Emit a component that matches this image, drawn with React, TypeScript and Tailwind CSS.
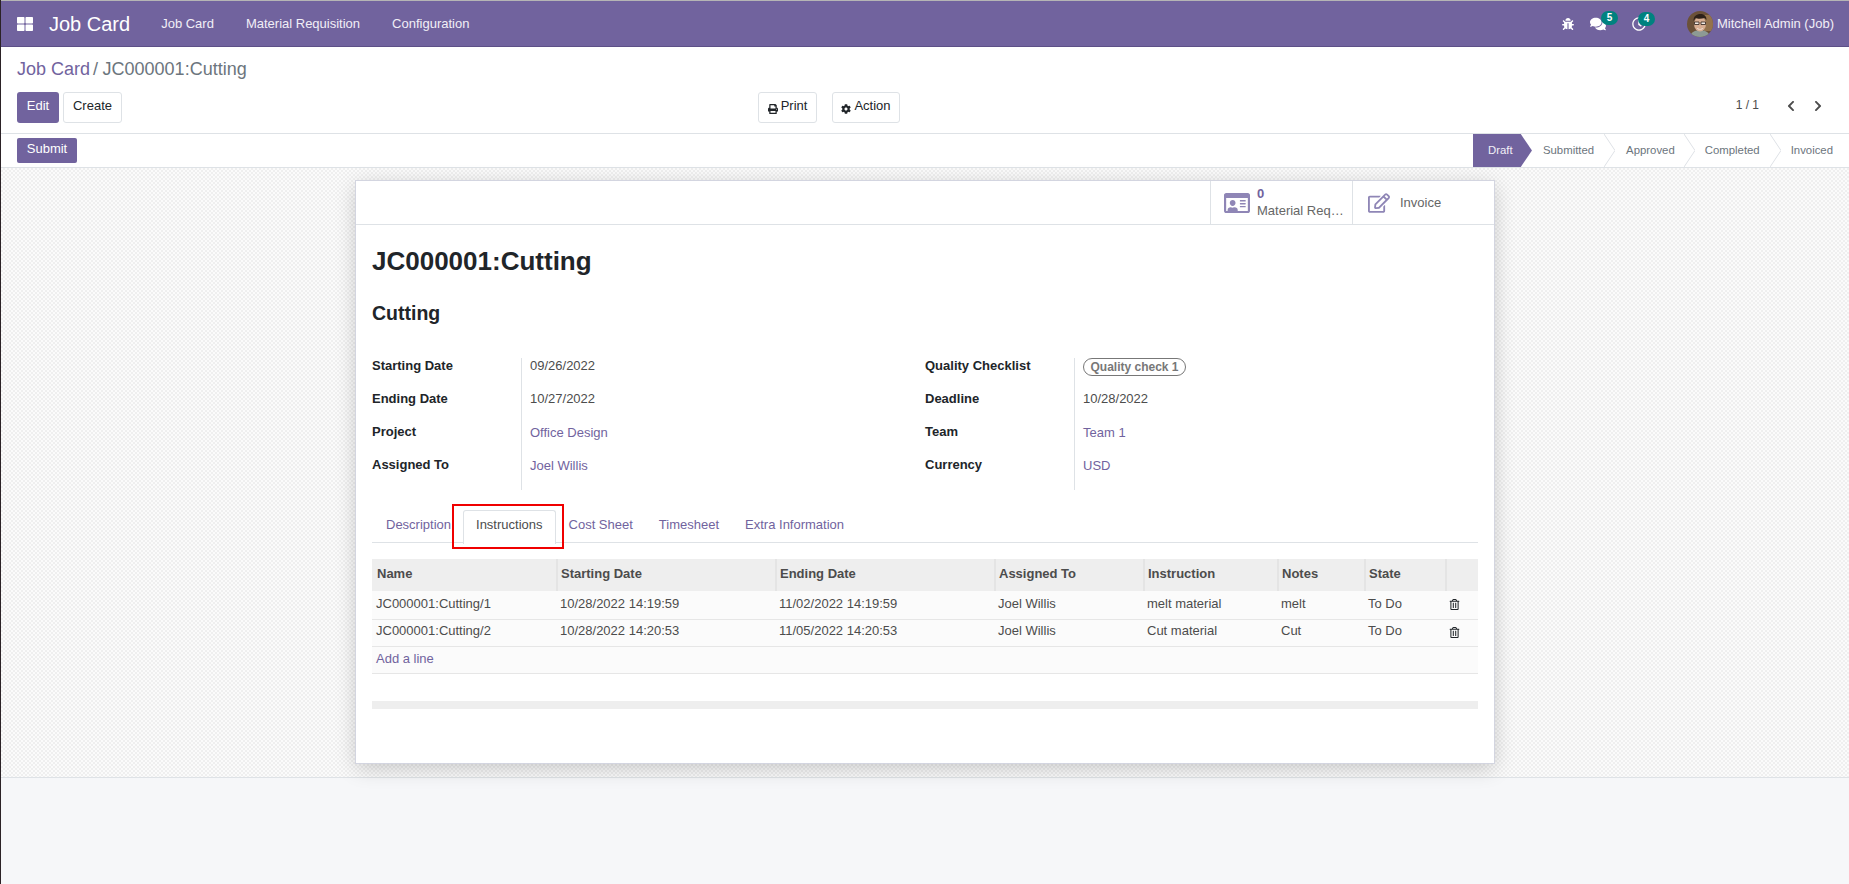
import React from "react"
import {
  FaBug,
  FaChevronLeft,
  FaChevronRight,
  FaCog,
  FaComments,
  FaPrint,
  FaRegClock,
  FaRegEdit,
  FaRegIdCard,
  FaRegTrashAlt,
  FaThLarge,
} from "react-icons/fa"

const columns = [
  { name: "Name", width: "w-[185px]" },
  { name: "Starting Date", width: "w-[219px]" },
  { name: "Ending Date", width: "w-[219px]" },
  { name: "Assigned To", width: "w-[149px]" },
  { name: "Instruction", width: "w-[134px]" },
  { name: "Notes", width: "w-[87px]" },
  { name: "State", width: "w-[81px]" },
  { name: "", width: "w-[32px]" },
]

const rows = [
  ["JC000001:Cutting/1", "10/28/2022 14:19:59", "11/02/2022 14:19:59", "Joel Willis", "melt material", "melt", "To Do"],
  ["JC000001:Cutting/2", "10/28/2022 14:20:53", "11/05/2022 14:20:53", "Joel Willis", "Cut material", "Cut", "To Do"],
]

const Avatar = () => (
  <svg viewBox="0 0 26 26" className="h-[26px] w-[26px] rounded-full">
    <rect width="26" height="26" fill="#6b5138" />
    <rect x="17" y="4" width="9" height="16" fill="#94724c" />
    <path d="M3 26c1-5 5-7 10-7s9 2 10 7z" fill="#8d9a94" />
    <ellipse cx="13" cy="13" rx="6" ry="7.5" fill="#d8ae92" />
    <path d="M6.5 10c0-5 3-7 7-7s6 2.500 6 6l-2-2c-3 1-7 1-9 0z" fill="#2d2119" />
    <path d="M7.500 11h4.500v2.500H7.500zM14 11h4.500v2.500H14z" fill="#f3ebe4" stroke="#2d2119" strokeWidth="0.8" />
    <path d="M10 17c2 1.500 4 1.500 6 0-.5 2-5.500 2-6 0z" fill="#fff" />
  </svg>
)

const Chevron = () => (
  <svg viewBox="0 0 11 33" className="h-[33px] w-[11px] text-[#dee2e6]">
    <path d="M0 0 L11 16.500 L0 33" fill="none" stroke="currentColor" />
  </svg>
)

const Badge = ({ value, className }: { value: number; className: string }) => (
  <span className={`absolute -top-[5px] flex h-[14px] w-[17px] items-center justify-center rounded-full bg-[#00827f] text-[10px] font-bold text-white ${className}`}>
    {value}
  </span>
)

const Field = ({ label, children }: { label: string; children: React.ReactNode }) => (
  <>
    <div className="h-[33px] text-[13px] font-bold leading-4 text-[#212529]">{label}</div>
    <div className="h-[33px] border-l border-[#dee2e6] pl-2 text-[13px] leading-4 text-[#4c4c4c]">{children}</div>
  </>
)

const Link = ({ children }: { children: React.ReactNode }) => (
  <span className="relative top-px text-[#71639e]">{children}</span>
)

export default function App() {
  return (
    <div className="flex h-[884px] w-full flex-col overflow-hidden border-l border-[#2b2226] bg-[#f6f7f9] font-['Liberation_Sans',Arial,sans-serif] text-[13px] text-[#4c4c4c]">
      <div className="h-px bg-[#b5b5b5]" />

      {/* top menu */}
      <header className="flex h-[46px] items-center border-b border-[#5d5087] bg-[#71639e] text-white">
        <FaThLarge className="ml-4 text-[16px]" />
        <span className="ml-4 text-[20px] leading-none">Job Card</span>
        <nav className="ml-[31px] flex gap-[32px] text-[13px] text-[#f1eff7]">
          <span>Job Card</span>
          <span>Material Requisition</span>
          <span>Configuration</span>
        </nav>
        <div className="ml-auto flex items-center pr-[15px]">
          <FaBug className="mr-[16px] text-[12px]" />
          <span className="relative mr-[26px]">
            <FaComments className="text-[16px]" />
            <Badge value={5} className="left-[11px]" />
          </span>
          <span className="relative mr-[41px]">
            <FaRegClock className="text-[14px]" />
            <Badge value={4} className="left-[6px]" />
          </span>
          <Avatar />
          <span className="ml-[4px] text-[13px] text-[#f1eff7]">Mitchell Admin (Job)</span>
        </div>
      </header>

      {/* control panel */}
      <section className="bg-white">
        <div className="px-4 pt-[12px] text-[18px] leading-[21px] text-[#6c757d]">
          <span className="text-[#71639e]">Job Card</span>
          <span className="ml-[3px]">/</span>
          <span className="ml-[4.5px]">JC000001:Cutting</span>
        </div>
        <div className="flex h-[53px] items-start pl-4 pr-[25px] pt-[12px]">
          <div className="flex w-[741px] gap-1">
            <button className="h-[31px] w-[42px] rounded-[3px] bg-[#71639e] pb-1 text-[13px] text-white">Edit</button>
            <button className="h-[31px] w-[59px] rounded-[3px] border border-[#dee2e6] pb-1 text-[13px] text-[#212529]">Create</button>
          </div>
          <button className="flex h-[31px] w-[59px] items-center justify-center gap-[3px] rounded-[3px] border border-[#dee2e6] text-[13px] text-[#212529]">
            <FaPrint className="mt-[3px] text-[10px]" />
            <span className="pb-1">Print</span>
          </button>
          <button className="ml-[15px] flex h-[31px] w-[68px] items-center justify-center gap-[3px] rounded-[3px] border border-[#dee2e6] text-[13px] text-[#212529]">
            <FaCog className="mt-[3px] text-[10px]" />
            <span className="pb-1">Action</span>
          </button>
          <div className="ml-auto flex items-center pt-[4px] text-[12px] text-[#4c4c4c]">
            <span>1 / 1</span>
            <FaChevronLeft className="ml-[26px] mt-px text-[12px]" />
            <FaChevronRight className="ml-[15px] mt-px text-[12px]" />
          </div>
        </div>
        <div className="flex h-[35px] items-start border-y border-[#dee2e6] pl-4">
          <button className="mt-1 h-[25px] w-[60px] rounded-[2px] bg-[#71639e] pb-[3px] text-[13px] text-white">Submit</button>
          <div className="ml-auto flex h-[33px] items-center pr-4 text-[11.375px] text-[#6c757d]">
            <span className="mr-[11px] flex h-[33px] w-[59px] items-center bg-[#71639e] pl-[15px] text-[#f1eff7] [clip-path:polygon(0_0,81%_0,100%_50%,81%_100%,0_100%)]">
              Draft
            </span>
            <span>Submitted</span>
            <span className="ml-[10px] mr-[11px]"><Chevron /></span>
            <span>Approved</span>
            <span className="ml-[9px] mr-[10px]"><Chevron /></span>
            <span>Completed</span>
            <span className="mx-[10px]"><Chevron /></span>
            <span>Invoiced</span>
          </div>
        </div>
      </section>

      {/* form sheet */}
      <section className="border-b border-[#dee2e6] bg-[repeating-conic-gradient(#efefef_0%_25%,#fbfbfb_0%_50%)] bg-[length:4px_4px] pb-[13px] pt-3">
        <div className="mx-auto h-[584px] w-[1140px] border border-[#d3d5e0] bg-white shadow-[0_5px_20px_-1px_rgba(0,0,0,0.2)]">
          <div className="flex h-[44px] justify-end border-b border-[#dee2e6]">
            <div className="flex w-[142px] items-center border-l border-[#dee2e6] pl-[13px]">
              <FaRegIdCard className="text-[26px] text-[#8f86b6]" />
              <div className="ml-[7px] text-[13px] leading-[16px] text-[#666666]">
                <div className="font-bold text-[#71639e]">0</div>
                <div className="mt-px">Material Req…</div>
              </div>
            </div>
            <div className="flex w-[142px] items-center border-l border-[#dee2e6] pl-[15px] text-[#666666]">
              <FaRegEdit className="text-[22px] text-[#8f86b6]" />
              <span className="ml-[10px] text-[13px]">Invoice</span>
            </div>
          </div>

          <div className="px-4">
            <h1 className="mt-[21px] text-[26px] font-bold leading-[30px] text-[#212529]">JC000001:Cutting</h1>
            <h2 className="mt-[25px] text-[19.5px] font-bold leading-6 text-[#212529]">Cutting</h2>

            <div className="mt-[33px] flex">
              <div className="grid w-[553px] grid-cols-[149px_1fr]">
                <Field label="Starting Date">09/26/2022</Field>
                <Field label="Ending Date">10/27/2022</Field>
                <Field label="Project"><Link>Office Design</Link></Field>
                <Field label="Assigned To"><Link>Joel Willis</Link></Field>
              </div>
              <div className="grid flex-1 grid-cols-[149px_1fr]">
                <Field label="Quality Checklist">
                  <span className="flex h-[18px] w-[103px] items-center justify-center rounded-full border border-[#777777] text-[12px] font-bold text-[#777777]">
                    Quality check 1
                  </span>
                </Field>
                <Field label="Deadline">10/28/2022</Field>
                <Field label="Team"><Link>Team 1</Link></Field>
                <Field label="Currency"><Link>USD</Link></Field>
              </div>
            </div>

            <div className="mt-[20px] flex h-[33px] border-b border-[#dee2e6] text-[13px] text-[#71639e]">
              <span className="pl-[14px] pr-[12px] pt-[5px]">Description</span>
              <span className="relative h-[34px] rounded-t-[3px] border border-b-0 border-[#dee2e6] bg-white px-[12px] pt-[4px] text-[#4c4c4c]">
                Instructions
                <span className="absolute -bottom-[5px] -left-[12px] -right-[9px] -top-[7px] border-2 border-[#f00000]" />
              </span>
              <span className="px-[13px] pt-[5px]">Cost Sheet</span>
              <span className="px-[13px] pt-[5px]">Timesheet</span>
              <span className="px-[13px] pt-[5px]">Extra Information</span>
            </div>

            <table className="mt-[16px] w-[1106px] table-fixed border-collapse text-[13px]">
              <thead>
                <tr className="h-[32px] bg-[#eeeeee] text-left">
                  {columns.map((col, i) => (
                    <th
                      key={i}
                      className={`${col.width} border-l-2 border-[#e4e4e4] pb-[2px] pl-[3px] font-bold text-[#4c4c4c] first:border-l-0 first:pl-[5px]`}
                    >
                      {col.name}
                    </th>
                  ))}
                </tr>
              </thead>
              <tbody>
                {rows.map((row, r) => (
                  <tr key={row[0]} className={`${r === 0 ? "h-[28px]" : "h-[27px]"} border-b border-[#e6e6e6] bg-[#fbfbfb]`}>
                    {row.map((cell, i) => (
                      <td key={i} className={`${r === 0 ? "pb-[2px]" : "pb-[3px]"} pl-[3px] pr-1 text-[#4c4c4c] first:pl-[4px]`}>{cell}</td>
                    ))}
                    <td className="pl-[3px]">
                      <FaRegTrashAlt className="text-[11px] text-[#212529]" />
                    </td>
                  </tr>
                ))}
                <tr className="h-[27px] border-b border-[#e6e6e6] bg-[#fbfbfb]">
                  <td colSpan={8} className="pb-[2px] pl-[4px] text-[#71639e]">Add a line</td>
                </tr>
              </tbody>
            </table>

            <div className="mt-[27px] h-2 w-[1106px] bg-[#eeeeee]" />
          </div>
        </div>
      </section>
    </div>
  )
}
